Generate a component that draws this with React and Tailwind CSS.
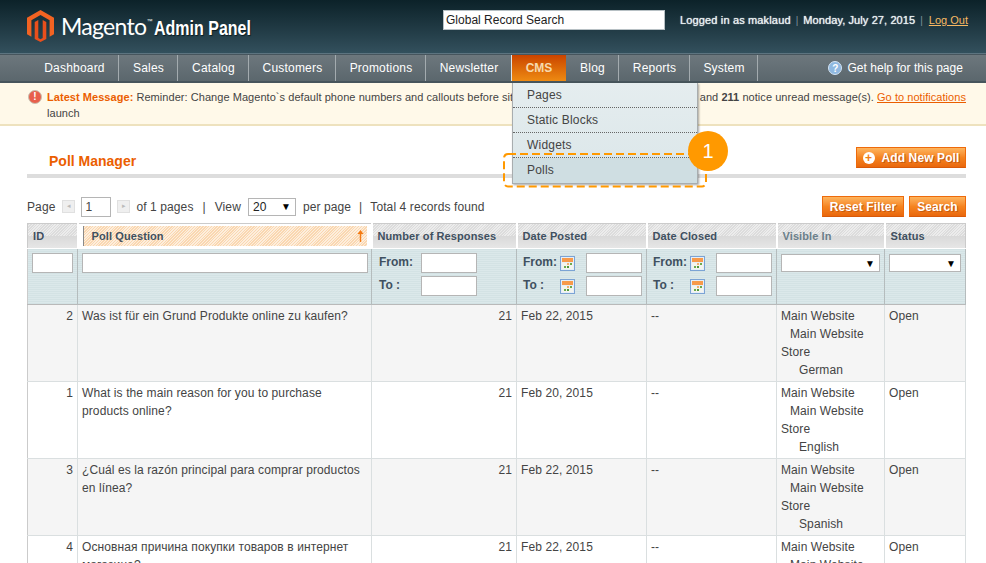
import React from 'react';

const navItems = [
    { label: 'Dashboard', width: 'w-[89px]' },
    { label: 'Sales', width: 'w-[59px]' },
    { label: 'Catalog', width: 'w-[71px]' },
    { label: 'Customers', width: 'w-[87px]' },
    { label: 'Promotions', width: 'w-[90px]' },
    { label: 'Newsletter', width: 'w-[86px]' },
    { label: 'CMS', width: 'w-[54px]' },
    { label: 'Blog', width: 'w-[53px]' },
    { label: 'Reports', width: 'w-[71px]' },
    { label: 'System', width: 'w-[68px]' },
];
const menuItems = ['Pages', 'Static Blocks', 'Widgets', 'Polls'];

const polls = [
    { id: 2, question: 'Was ist für ein Grund Produkte online zu kaufen?', posted: 'Feb 22, 2015', lang: 'German' },
    { id: 1, question: 'What is the main reason for you to purchase products online?', posted: 'Feb 20, 2015', lang: 'English' },
    { id: 3, question: '¿Cuál es la razón principal para comprar productos en línea?', posted: 'Feb 22, 2015', lang: 'Spanish' },
    { id: 4, question: 'Основная причина покупки товаров в интернет магазине?', posted: 'Feb 22, 2015', lang: 'Russian' },
];

function MagentoLogo() {
    return (
        <svg width="27" height="32" viewBox="0 0 27 32" className="shrink-0">
            <path d="M13.5 0 27 7.8v16.4L22.6 26.8V10.2L13.5 5 4.4 10.2v16.6L0 24.2V7.8z" fill="#f26322" />
            <path d="M11.3 10v18l2.2 1.3 2.2-1.3V10l3.6 2.1v17L13.5 32l-5.8-2.9v-17z" fill="#ea4f1c" />
        </svg>
    );
}

function CalendarIcon() {
    return (
        <svg width="15" height="15" viewBox="0 0 15 15" className="shrink-0">
            <rect x="0.5" y="0.5" width="14" height="14" fill="#e6eef6" stroke="#7ba3d4" />
            <rect x="2" y="2" width="11" height="4" fill="#f79a4b" />
            <rect x="2" y="7" width="11" height="6" fill="#f4f4ee" />
            <rect x="7" y="7" width="2" height="2" fill="#f0b070" />
            <rect x="10" y="7" width="2" height="2" fill="#6cab4e" />
            <rect x="4" y="10" width="2" height="2" fill="#6cab4e" />
            <rect x="7" y="10" width="2" height="2" fill="#4f9a3a" />
        </svg>
    );
}

function SortArrow() {
    return (
        <svg width="7" height="12" viewBox="0 0 7 12">
            <path d="M3.5 0 6.5 4H4.2v8H2.8V4H.5z" fill="#f47a12" />
        </svg>
    );
}

function OrangeButton({ children, className = '' }) {
    return (
        <button className={`h-[21px] bg-gradient-to-b from-[#fdb45c] via-[#f5841f] to-[#e9670c] border border-[#ee6a0b] border-b-[#d85909] text-white text-[12px] font-bold tracking-[0.1px] [text-shadow:1px_1px_0_#c65a10] flex items-center justify-center ${className}`}>
            {children}
        </button>
    );
}

function FilterInput({ className = '' }) {
    return <input className={`h-[20px] bg-white border border-[#b5b5b5] ${className}`} />;
}

function DateFilter() {
    return (
        <div className="flex flex-col gap-[3px] pl-[2px] text-[12px] font-bold text-[#3f5060]">
            {['From:', 'To :'].map((label) => (
                <div key={label} className="flex items-center">
                    <span className="w-[37px] -mt-[3px]">{label}</span>
                    <CalendarIcon />
                    <FilterInput className="w-[56px] ml-[11px]" />
                </div>
            ))}
        </div>
    );
}

function FakeSelect({ className = '' }) {
    return (
        <div className={`h-[18px] bg-white border border-[#b5b5b5] flex items-center justify-end pr-[4px] text-[10px] text-black ${className}`}>▼</div>
    );
}

function HeaderCell({ children, active = false, muted = false }) {
    return (
        <th className="p-0 border-r-2 border-b border-white last:border-r-0 font-bold text-left align-top">
            <div className={`flex items-center text-[11px] tracking-[0.1px] ${muted ? 'text-[#6b7f8a]' : 'text-[#3f5060]'} ${active ? 'h-[20px] ml-[4px] mr-[4px] mt-[2px] pl-[8px] pr-[3px] justify-between border-l border-[#8a8a8a] bg-[repeating-linear-gradient(135deg,#fad7b0_0_1px,#fdeedd_1px_2px)]' : 'h-[24px] pl-[5px] bg-[linear-gradient(to_bottom,transparent_50%,#d9d9d9_50%,#e6e6e6_100%),repeating-linear-gradient(135deg,#dcdcdc_0_1px,#ececec_1px_2px)]'}`}>
                {children}
            </div>
        </th>
    );
}

export default function App() {
    return (
        <div className="relative w-[986px] h-[563px] overflow-hidden bg-white font-['Liberation_Sans',Arial,sans-serif] text-[12px] text-[#444]">
            {/* Header */}
            <header className="h-[54px] flex items-start justify-between pl-[27px] pr-[18px] bg-gradient-to-b from-[#0c2229] to-[#33505d] border-b border-[#5d7480]">
                <div className="flex items-center mt-[10px]">
                    <MagentoLogo />
                    <span className="ml-[7px] font-['Lato',sans-serif] text-[23px] leading-[30px] tracking-[-0.7px] text-white">Magento</span>
                    <span className="text-[6px] text-white -mt-[10px]">™</span>
                    <span className="inline-block ml-[2px] mt-[4px] origin-left scale-x-[0.8] font-bold text-[20px] leading-[24px] text-white [text-shadow:1px_1px_1px_#0a1a20]">Admin Panel</span>
                </div>
                <div className="flex items-center mt-[10px]">
                    <input defaultValue="Global Record Search" className="w-[222px] h-[20px] bg-white border border-[#b7c0c4] px-[2px] text-[12px] text-[#222]" />
                    <span className="ml-[15px] text-[11px] tracking-[0.15px] text-[#e8f0f2] [text-shadow:0_0_1px_#ffffff]">Logged in as maklaud</span>
                    <span className="mx-[5px] text-[10px] text-[#7f949d]">|</span>
                    <span className="text-[11px] tracking-[0.1px] text-[#e8f0f2] [text-shadow:0_0_1px_#ffffff]">Monday, July 27, 2015</span>
                    <span className="ml-[5px] mr-[6px] text-[10px] text-[#7f949d]">|</span>
                    <a className="text-[11px] text-[#f7b963] underline">Log Out</a>
                </div>
            </header>

            {/* Main nav */}
            <nav className="h-[29px] flex items-stretch justify-between pl-[30px] pr-[23px] bg-gradient-to-b from-[#6d777d] to-[#5b676d] border-t border-[#47555d] border-b-2 border-b-[#47555c]">
                <ul className="flex items-stretch">
                    {navItems.map(({ label, width }) => (
                        label === 'CMS' ? (
                            <li key={label} className={`${width} flex items-center justify-center bg-gradient-to-b from-[#c94300] to-[#ee8a12] text-[#f6d9ad] font-bold`}>{label}</li>
                        ) : (
                            <li key={label} className={`${width} pl-[1px] flex items-center justify-center text-[12px] tracking-[0.2px] text-white border-r ${label === 'Newsletter' ? 'border-[#dfe3e5]' : 'border-[#a3abaf]'}`}>{label}</li>
                        )
                    ))}
                </ul>
                <div className="flex items-center gap-[5px] text-white tracking-[0.04px]">
                    <span className="w-[14px] h-[14px] rounded-full bg-[#8fb8e0] border border-[#d5e5f5] flex items-center justify-center text-[10px] font-bold text-white">?</span>
                    Get help for this page
                </div>
            </nav>

            {/* Notification bar */}
            <div className="relative h-[43px] bg-[#fff9e9] border-b-2 border-[#eee2be] pl-[47px] pr-[20px] pt-[6px] text-[11px] leading-[16px] text-[#444] tracking-[0.05px]">
                <span className="absolute left-[28px] top-[7px] w-[14px] h-[14px] rounded-full bg-[#e8604c] border border-[#c9c0b0] flex items-center justify-center text-[10px] font-bold text-white">!</span>
                <span className="float-right">
                    You have 5 critical, 4 major, 9 minor and <b>211</b> notice unread message(s). <a className="text-[#eb5e00] underline">Go to notifications</a>
                </span>
                <b className="text-[#eb5e00]">Latest Message:</b> Reminder: Change Magento`s default phone numbers and callouts before site launch
            </div>

            {/* Content */}
            <main className="pl-[27px] pr-[20px]">
                <div className="h-[52px] flex items-end justify-between pl-[22px] pb-[6px] border-b-4 border-[#dddddd]">
                    <h1 className="text-[14px] font-bold text-[#eb5e00] leading-[18px] -mb-[2px]">Poll Manager</h1>
                    <OrangeButton className="w-[110px] gap-[7px]">
                        <span className="w-[12px] h-[12px] rounded-full bg-white text-[#f07d14] flex items-center justify-center text-[12px] leading-none [text-shadow:none]">+</span>
                        Add New Poll
                    </OrangeButton>
                </div>

                <div className="h-[45px] flex items-end justify-between pb-[6px]">
                    <div className="h-[21px] flex items-center text-[12px] tracking-[0.1px]">
                        <span>Page</span>
                        <span className="ml-[7px] w-[13px] h-[13px] bg-[#efefef] border border-[#e0e0e0] flex items-center justify-center text-[7px] text-[#bbb]">◂</span>
                        <input defaultValue="1" className="ml-[6px] w-[30px] h-[20px] border border-[#b5b5b5] px-[3px] text-[12px] text-[#444]" />
                        <span className="ml-[6px] w-[13px] h-[13px] bg-[#efefef] border border-[#e0e0e0] flex items-center justify-center text-[7px] text-[#bbb]">▸</span>
                        <span className="ml-[6px]">of 1 pages</span>
                        <span className="mx-[9px]">|</span>
                        <span>View</span>
                        <div className="ml-[7px] w-[48px] h-[18px] border border-[#b5b5b5] flex items-center justify-between px-[4px] text-[#222]">20 <span className="text-[10px] text-black">▼</span></div>
                        <span className="ml-[7px]">per page</span>
                        <span className="mx-[8px]">|</span>
                        <span>Total 4 records found</span>
                    </div>
                    <div className="flex gap-[5px]">
                        <OrangeButton className="w-[82px]">Reset Filter</OrangeButton>
                        <OrangeButton className="w-[57px]">Search</OrangeButton>
                    </div>
                </div>

                {/* Grid */}
                <table className="table-fixed border-collapse w-[938px] border border-[#cbcbcb]">
                    <colgroup>
                        <col className="w-[50px]" />
                        <col className="w-[294px]" />
                        <col className="w-[145px]" />
                        <col className="w-[130px]" />
                        <col className="w-[130px]" />
                        <col className="w-[108px]" />
                        <col className="w-[81px]" />
                    </colgroup>
                    <thead>
                        <tr>
                            <HeaderCell>ID</HeaderCell>
                            <HeaderCell active>Poll Question <SortArrow /></HeaderCell>
                            <HeaderCell>Number of Responses</HeaderCell>
                            <HeaderCell>Date Posted</HeaderCell>
                            <HeaderCell>Date Closed</HeaderCell>
                            <HeaderCell muted>Visible In</HeaderCell>
                            <HeaderCell>Status</HeaderCell>
                        </tr>
                        <tr className="h-[56px] bg-[repeating-linear-gradient(0deg,#d3e2e4_0_1px,#dbe8ea_1px_2px)] border-b border-[#b9b9b9] [&>td]:border-r [&>td]:border-[#b5bcbd] [&>td]:align-top [&>td]:px-[4px] [&>td]:pt-[4px]">
                            <td><FilterInput className="w-[41px]" /></td>
                            <td><FilterInput className="w-[286px]" /></td>
                            <td>
                                <div className="flex flex-col gap-[3px] pl-[3px] text-[12px] font-bold text-[#3f5060]">
                                    {['From:', 'To :'].map((label) => (
                                        <div key={label} className="flex items-center">
                                            <span className="w-[42px] -mt-[3px]">{label}</span>
                                            <FilterInput className="w-[56px]" />
                                        </div>
                                    ))}
                                </div>
                            </td>
                            <td><DateFilter /></td>
                            <td><DateFilter /></td>
                            <td><FakeSelect className="w-[99px] mt-[1px]" /></td>
                            <td><FakeSelect className="w-[72px] mt-[1px]" /></td>
                        </tr>
                    </thead>
                    <tbody>
                        {polls.map((poll, i) => (
                            <tr key={poll.id} className={`${i % 2 === 0 ? 'bg-[#f5f5f5]' : 'bg-white'} h-[77px] border-b border-[#dadfe0] leading-[18px] tracking-[0.1px] [&>td]:border-r [&>td]:border-[#dadfe0] [&>td]:align-top [&>td]:px-[4px] [&>td]:py-[2px]`}>
                                <td className="text-right">{poll.id}</td>
                                <td>{poll.question}</td>
                                <td className="text-right">21</td>
                                <td>{poll.posted}</td>
                                <td>--</td>
                                <td>
                                    Main Website
                                    <br /><span className="inline-block w-[9px]" />Main Website Store
                                    <br /><span className="inline-block w-[18px]" />{poll.lang}
                                </td>
                                <td>Open</td>
                            </tr>
                        ))}
                    </tbody>
                </table>
            </main>

            {/* CMS dropdown */}
            <ul className="absolute left-[512px] top-[83px] w-[186px] bg-gradient-to-b from-[#e5edef] to-[#dbe6e9] border-x border-b border-[#a8adaf] shadow-[1px_1px_2px_rgba(0,0,0,0.35)]">
                {menuItems.map((item, i) => (
                    <li key={item} className={`h-[25px] pl-[14px] flex items-center text-[12px] tracking-[0.2px] text-[#444] border-b ${i < 3 ? 'border-dotted border-[#666]' : 'border-transparent bg-[#cfdee2]'}`}>{item}</li>
                ))}
            </ul>

            {/* Tutorial highlight */}
            <svg className="absolute left-[502px] top-[152px]" width="206" height="36" viewBox="0 0 206 36" fill="none">
                <rect x="2" y="2" width="202" height="32.5" rx="4" stroke="#ff9900" strokeWidth="2" strokeDasharray="8 4" />
            </svg>
            <div className="absolute left-[688px] top-[131px] w-[40px] h-[40px] rounded-full bg-[#ff9900] flex items-center justify-center text-white text-[20px]">1</div>
        </div>
    );
}
